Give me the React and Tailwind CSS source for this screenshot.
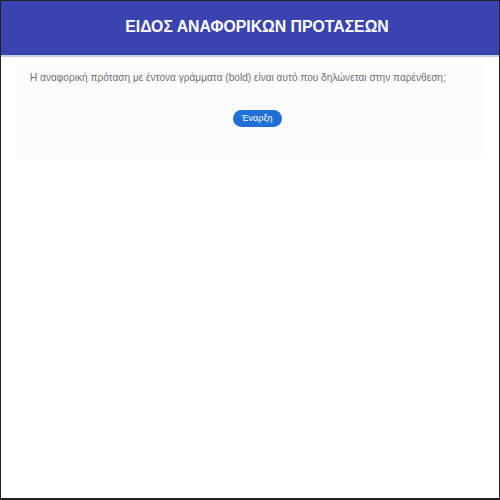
import React from "react";

export default function App() {
  return (
    <div
      className="w-[500px] h-[500px] bg-white border border-[#222] border-b-2 overflow-hidden flex flex-col"
      style={{ fontFamily: '"Liberation Sans", Arial, sans-serif' }}
    >
      {/* header */}
      <div className="h-[56px] shrink-0 bg-[#3a44b0] flex items-center justify-center pl-[14px] pb-[2px] border-b-2 border-[#c9cce8]">
        <h1 className="text-white text-[15.8px] font-semibold">
          ΕΙΔΟΣ ΑΝΑΦΟΡΙΚΩΝ ΠΡΟΤΑΣΕΩΝ
        </h1>
      </div>

      {/* question panel */}
      <div className="mx-[15px] bg-[#fcfcfc] h-[102px] pt-[13px] px-[14px]">
        <p className="text-[10.1px] text-[#707070]">
          Η αναφορική πρόταση με έντονα γράμματα (bold) είναι αυτό που δηλώνεται στην παρένθεση;
        </p>
        <div className="flex justify-center mt-[25px] pl-[14px]">
          <button className="h-[17px] w-[49px] rounded-full bg-[#1f6fd6] text-white text-[9px] leading-none">
            Έναρξη
          </button>
        </div>
      </div>
    </div>
  );
}
